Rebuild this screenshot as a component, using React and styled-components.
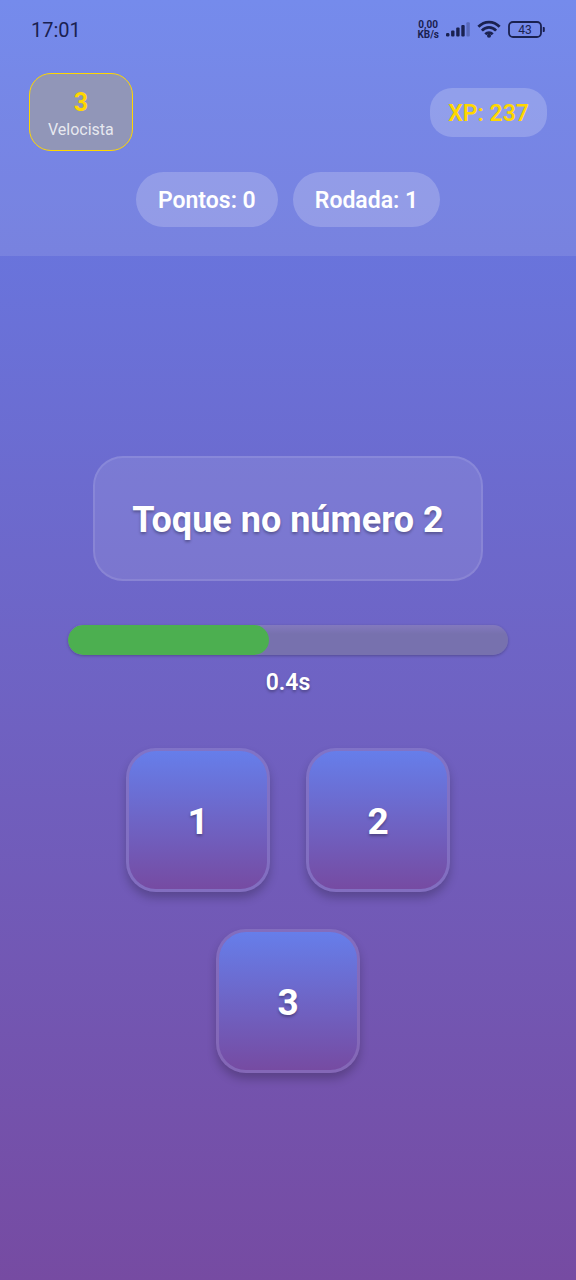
import styled, { createGlobalStyle } from 'styled-components';

const GlobalStyle = createGlobalStyle`
  * {
    box-sizing: border-box;
  }

  body {
    margin: 0;
    font-family: Roboto, sans-serif;
    color: #fff;
  }
`;

const Screen = styled.div`
  min-height: 100vh;
  display: flex;
  flex-direction: column;
  background: linear-gradient(#667eea, #764ba2);
`;

const Header = styled.header`
  padding: 0 29px 29px;
  background: rgba(255, 255, 255, 0.1);
`;

const StatusBar = styled.div`
  height: 59px;
  padding: 0 2px;
  display: flex;
  align-items: center;
  justify-content: space-between;
  color: #1a2150;
`;

const Clock = styled.time`
  font-size: 20px;
  line-height: 24px;
`;

const StatusIcons = styled.div`
  display: flex;
  align-items: center;
  gap: 7px;
`;

const NetSpeed = styled.div`
  font-size: 10px;
  line-height: 10px;
  font-weight: 700;
  text-align: center;
`;

const PlayerRow = styled.div`
  margin-top: 14px;
  display: flex;
  align-items: center;
  justify-content: space-between;
`;

const Level = styled.div`
  padding: 14px 18px 8px;
  border: 1px solid #ffd700;
  border-radius: 22px;
  background: #9196b8;
  text-align: center;
`;

const LevelNumber = styled.div`
  font-size: 25px;
  line-height: 30px;
  font-weight: 700;
  color: #ffd700;
`;

const LevelName = styled.div`
  font-size: 16px;
  line-height: 24px;
  color: rgba(255, 255, 255, 0.8);
`;

const Pill = styled.div`
  padding: ${props => props.$small ? "11px 18px 9px" : "14px 22px 12px"};
  border-radius: ${props => props.$small ? "22px" : "28px"};
  background: rgba(255, 255, 255, 0.2);
  color: ${props => props.$gold ? "#ffd700" : "#fff"};
  font-size: 23px;
  line-height: 29px;
  font-weight: 600;
`;

const ScoreRow = styled.div`
  margin-top: 21px;
  display: flex;
  justify-content: center;
  gap: 15px;
`;

const Game = styled.main`
  flex: 1;
  padding: 0 68px 8px;
  display: flex;
  flex-direction: column;
  align-items: center;
  justify-content: center;
`;

const Prompt = styled.h1`
  margin: 0 0 44px;
  padding: 42px 37px 38px;
  border: 2px solid rgba(255, 255, 255, 0.1);
  border-radius: 30px;
  background: rgba(255, 255, 255, 0.1);
  font-size: 36px;
  line-height: 41px;
  font-weight: 700;
  text-align: center;
  text-shadow: 0 2px 3px rgba(0, 0, 0, 0.3);
`;

const Track = styled.div`
  width: 100%;
  height: 30px;
  border-radius: 15px;
  background: linear-gradient(#8379be, #7771ae 30%);
  box-shadow: 0 1px 3px rgba(0, 0, 0, 0.25);
  overflow: hidden;
`;

const Fill = styled.div`
  height: 100%;
  border-radius: 15px;
  background: #4caf50;
`;

const TimeLeft = styled.div`
  margin: 13px 0 51px;
  font-size: 23px;
  line-height: 29px;
  font-weight: 600;
  text-shadow: 0 2px 3px rgba(0, 0, 0, 0.3);
`;

const Choices = styled.div`
  width: 360px;
  max-width: 100%;
  display: flex;
  flex-wrap: wrap;
  justify-content: center;
  gap: 37px 36px;
`;

const Choice = styled.button`
  width: 144px;
  height: 144px;
  padding: 4px 0 0;
  border: 3px solid rgba(255, 255, 255, 0.12);
  border-radius: 30px;
  background: linear-gradient(#667eea, #764ba2) padding-box;
  box-shadow: 0 6px 10px rgba(0, 0, 0, 0.22);
  color: #fff;
  font-family: inherit;
  font-size: 37px;
  line-height: 44px;
  font-weight: 700;
  text-shadow: 0 2px 3px rgba(0, 0, 0, 0.3);
  cursor: pointer;
`;

const choices = [1, 2, 3];

function SignalIcon() {
  return (
    <svg width="24" height="15" viewBox="0 0 24 15" fill="currentColor" aria-hidden="true">
      <rect x="0" y="11" width="3.4" height="3.5" rx="1.2" />
      <rect x="5.1" y="8.5" width="3.4" height="6" rx="1" />
      <rect x="10.2" y="5.5" width="3.4" height="9" rx="1" />
      <rect x="15.3" y="3" width="3.4" height="11.5" rx="1" />
      <rect x="20.4" y="0.3" width="3.4" height="14.2" rx="1" opacity="0.3" />
    </svg>
  );
}

function WifiIcon() {
  return (
    <svg width="24" height="19" viewBox="0 0 26 20" fill="none" stroke="currentColor" strokeWidth="3" aria-hidden="true">
      <path d="M1.5 7C8 .2 18 .2 24.5 7" />
      <path d="M5.3 11.2c4.4-4.6 11-4.6 15.4 0" />
      <path d="M9 15.1c2.3-2.4 5.7-2.4 8 0" />
      <circle cx="13" cy="16.8" r="2.2" fill="currentColor" stroke="none" />
    </svg>
  );
}

function BatteryIcon() {
  return (
    <svg width="37" height="17" viewBox="0 0 37 17" role="img" aria-label="43%">
      <rect x="1" y="1" width="32" height="15" rx="4" fill="none" stroke="currentColor" strokeWidth="1.8" />
      <path d="M34.8 6h1q1 0 1 1v3q0 1-1 1h-1z" fill="currentColor" />
      <text x="17" y="13" fontSize="12" textAnchor="middle" fill="currentColor">43</text>
    </svg>
  );
}

function App() {
  const progress = 201 / 440 * 100;

  return (
    <Screen>
      <GlobalStyle />
      <Header>
        <StatusBar>
          <Clock>17:01</Clock>
          <StatusIcons>
            <NetSpeed>
              <div>0,00</div>
              <div>KB/s</div>
            </NetSpeed>
            <SignalIcon />
            <WifiIcon />
            <BatteryIcon />
          </StatusIcons>
        </StatusBar>
        <PlayerRow>
          <Level>
            <LevelNumber>3</LevelNumber>
            <LevelName>Velocista</LevelName>
          </Level>
          <Pill $small $gold>XP: 237</Pill>
        </PlayerRow>
        <ScoreRow>
          <Pill>Pontos: 0</Pill>
          <Pill>Rodada: 1</Pill>
        </ScoreRow>
      </Header>

      <Game>
        <Prompt>Toque no número 2</Prompt>
        <Track role="progressbar" aria-label="Tempo" aria-valuenow={Math.round(progress)}>
          <Fill style={{ width: `${progress}%` }} />
        </Track>
        <TimeLeft>0.4s</TimeLeft>
        <Choices>
          {choices.map((number) => {
            return <Choice key={number} type="button">{number}</Choice>
          })}
        </Choices>
      </Game>
    </Screen>
  );
}

export default App;
